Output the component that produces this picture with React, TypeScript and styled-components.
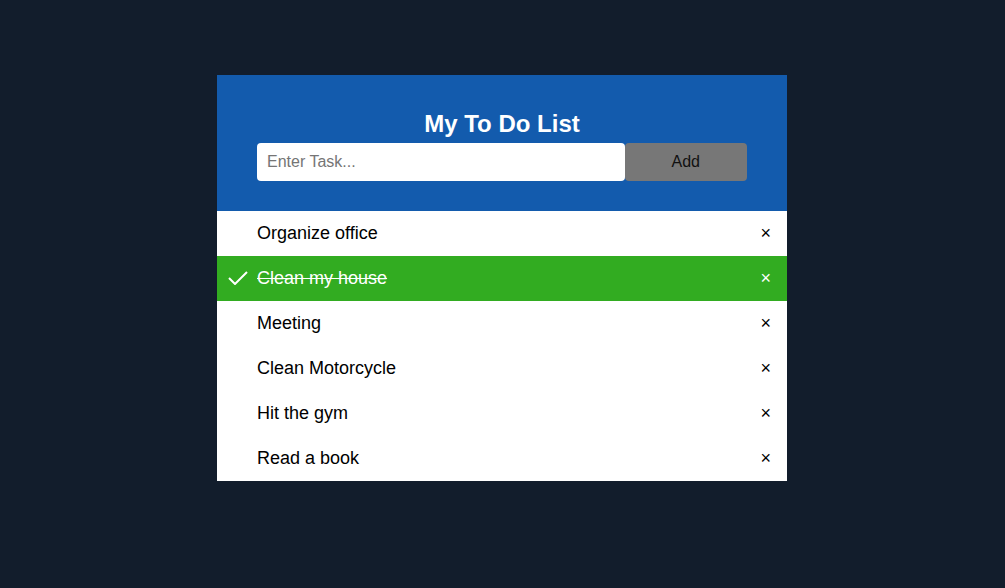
import React from "react";
import styled, { createGlobalStyle } from "styled-components";

const Global = createGlobalStyle`
  html, body {
    margin: 0;
    padding: 0;
    background: #121d2c;
    font-family: "Liberation Sans", Arial, sans-serif;
  }
  * { box-sizing: border-box; }
`;

const Page = styled.div`
  display: flex;
  justify-content: flex-start;
  padding: 75px 0 0 217px;
  min-height: 588px;
`;

const Card = styled.div`
  width: 570px;
  display: flex;
  flex-direction: column;
`;

const Header = styled.div`
  background: #135bad;
  padding: 30px 40px;
  display: flex;
  flex-direction: column;
  align-items: stretch;
`;

const Title = styled.h2`
  margin: 5px;
  color: #fff;
  font-size: 24px;
  font-weight: 700;
  text-align: center;
  line-height: 27.6px;
`;

const Form = styled.div`
  display: flex;
`;

const Input = styled.input`
  width: 75%;
  height: 38px;
  border: none;
  border-radius: 4px;
  padding: 10px;
  font-size: 16px;
  font-family: "Liberation Sans", Arial, sans-serif;
  outline: none;
  &::placeholder { color: #757575; }
`;

const AddButton = styled.button`
  width: 25%;
  height: 38px;
  border: none;
  border-radius: 4px;
  background: #777777;
  color: #111;
  font-size: 16px;
  font-family: "Liberation Sans", Arial, sans-serif;
  padding: 10px;
`;

const List = styled.ul`
  list-style: none;
  margin: 0;
  padding: 0;
`;

const Item = styled.li<{ $checked?: boolean }>`
  display: flex;
  align-items: center;
  height: 45px;
  background: ${(p) => (p.$checked ? "#32ac21" : "#ffffff")};
  color: ${(p) => (p.$checked ? "#ffffff" : "#000000")};
  font-size: 18px;
`;

const CheckSlot = styled.span`
  width: 40px;
  display: flex;
  justify-content: center;
  align-items: center;
  padding-left: 1px;
`;

const Label = styled.span<{ $checked?: boolean }>`
  flex: 1;
  text-decoration: ${(p) => (p.$checked ? "line-through" : "none")};
`;

const Close = styled.span<{ $checked?: boolean }>`
  padding: 0 16px;
  font-size: 18px;
  color: ${(p) => (p.$checked ? "#ffffff" : "#000000")};
`;

const tasks = [
  { text: "Organize office", done: false },
  { text: "Clean my house", done: true },
  { text: "Meeting", done: false },
  { text: "Clean Motorcycle", done: false },
  { text: "Hit the gym", done: false },
  { text: "Read a book", done: false },
];

const Check = () => (
  <svg width="20" height="14" viewBox="0 0 20 14" fill="none">
    <path d="M1 7 L7 13 L19 1" stroke="#fff" strokeWidth="2" />
  </svg>
);

export default function App() {
  return (
    <>
      <Global />
      <Page>
        <Card>
          <Header>
            <Title>My To Do List</Title>
            <Form>
              <Input placeholder="Enter Task..." />
              <AddButton>Add</AddButton>
            </Form>
          </Header>
          <List>
            {tasks.map((t) => (
              <Item key={t.text} $checked={t.done}>
                <CheckSlot>{t.done && <Check />}</CheckSlot>
                <Label $checked={t.done}>{t.text}</Label>
                <Close $checked={t.done}>{"\u00D7"}</Close>
              </Item>
            ))}
          </List>
        </Card>
      </Page>
    </>
  );
}
